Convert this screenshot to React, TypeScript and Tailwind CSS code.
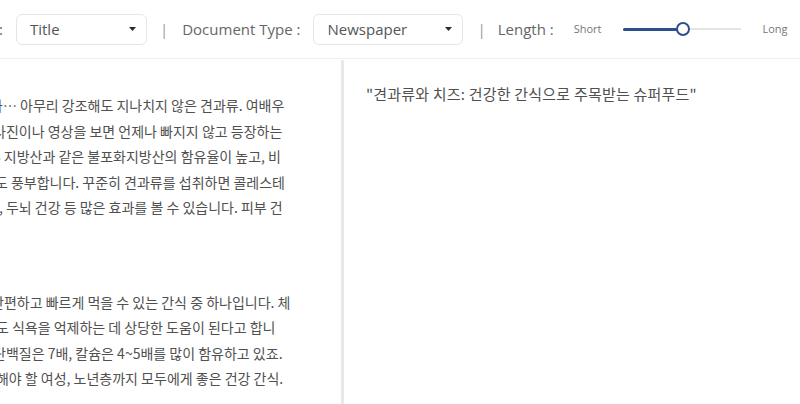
import React from 'react'

// ============================================
// DATA
// ============================================

type Line = { text: string; offset: string }

const PARA_ONE: Line[] = [
  { text: '과… 아무리 강조해도 지나치지 않은 견과류. 여배우', offset: 'ml-[-10px]' },
  { text: '사진이나 영상을 보면 언제나 빠지지 않고 등장하는', offset: 'ml-[-7px]' },
  { text: '가3 지방산과 같은 불포화지방산의 함유율이 높고, 비', offset: 'ml-[-20px]' },
  { text: '랄도 풍부합니다. 꾸준히 견과류를 섭취하면 콜레스테', offset: 'ml-[-18px]' },
  { text: '선, 두뇌 건강 등 많은 효과를 볼 수 있습니다. 피부 건', offset: 'ml-[-14px]' },
]

const PARA_TWO: Line[] = [
  { text: '간편하고 빠르게 먹을 수 있는 간식 중 하나입니다. 체', offset: 'ml-[-9px]' },
  { text: '에도 식욕을 억제하는 데 상당한 도움이 된다고 합니', offset: 'ml-[-17px]' },
  { text: '단백질은 7배, 칼슘은 4~5배를 많이 함유하고 있죠.', offset: 'ml-[-7px]' },
  { text: '충해야 할 여성, 노년층까지 모두에게 좋은 건강 간식.', offset: 'ml-[-17px]' },
]

// ============================================
// PIECES
// ============================================

function Caret() {
  return (
    <svg width="7" height="4" viewBox="0 0 7 4" className="shrink-0">
      <path d="M0 0 L7 0 L3.5 4 Z" fill="#2b2b2b" />
    </svg>
  )
}

function SelectBox({ value, width }: { value: string; width: string }) {
  return (
    <div
      className={`${width} h-[31px] flex items-center justify-between pl-[13px] pr-[10px] border border-[#e6e6e6] rounded-[6px] bg-white`}
    >
      <span className="text-[15px] text-[#555]">{value}</span>
      <Caret />
    </div>
  )
}

function Divider({ className }: { className: string }) {
  return <span className={`text-[15px] text-[#9a9a9a] ${className}`}>|</span>
}

function Slider() {
  return (
    <div className="relative w-[118px] h-[14px] flex items-center">
      <div className="w-full h-[2px] bg-[#e4e4e4]" />
      <div className="absolute left-0 top-[5.5px] w-[60px] h-[3px] rounded-full bg-[#2d4f8b]" />
      <div className="absolute left-[53px] top-0 w-[14px] h-[14px] rounded-full border-2 border-[#2d4f8b] bg-white" />
    </div>
  )
}

// ============================================
// MAIN COMPONENT
// ============================================

export default function App() {
  const korean = { fontFamily: '"Noto Sans CJK KR", "Noto Sans", sans-serif' }

  return (
    <div
      className="w-[800px] h-[404px] overflow-hidden bg-white flex flex-col"
      style={{ fontFamily: '"Open Sans", "Noto Sans", sans-serif' }}
    >
      {/* Options bar */}
      <header className="h-[59px] shrink-0 flex items-center border-b border-[#f0f0f0] text-[#666]">
        <span className="text-[15px] ml-[-1px]">:</span>
        <div className="ml-[13px]">
          <SelectBox value="Title" width="w-[131px]" />
        </div>
        <Divider className="ml-[13px]" />
        <span className="text-[15px] ml-[14px]">Document Type :</span>
        <div className="ml-[13px]">
          <SelectBox value="Newspaper" width="w-[150px]" />
        </div>
        <Divider className="ml-[14px]" />
        <span className="text-[15px] ml-[12px]">Length :</span>
        <span className="text-[11px] text-[#777] ml-[20px]">Short</span>
        <div className="ml-[21px]">
          <Slider />
        </div>
        <span className="text-[11px] text-[#777] ml-[22px]">Long</span>
      </header>

      {/* Body */}
      <main className="flex-1 flex text-[14px] text-[#505050]" style={korean}>
        <section className="w-[341px] shrink-0 overflow-hidden pt-[34px]">
          {PARA_ONE.map(line => (
            <div key={line.text} className={`whitespace-nowrap leading-[25.5px] ${line.offset}`}>
              {line.text}
            </div>
          ))}
          <div className="mt-[69px]">
            {PARA_TWO.map(line => (
              <div key={line.text} className={`whitespace-nowrap leading-[25.5px] ${line.offset}`}>
                {line.text}
              </div>
            ))}
          </div>
        </section>

        <div className="w-[3px] shrink-0 bg-[#e8e8e8] mt-[1px]" />

        <section className="flex-1 pl-[22px] pt-[22px]">
          <div className="leading-[25.5px] whitespace-nowrap text-[15px] tracking-[0.2px]">
            "견과류와 치즈: 건강한 간식으로 주목받는 슈퍼푸드"
          </div>
        </section>
      </main>
    </div>
  )
}
